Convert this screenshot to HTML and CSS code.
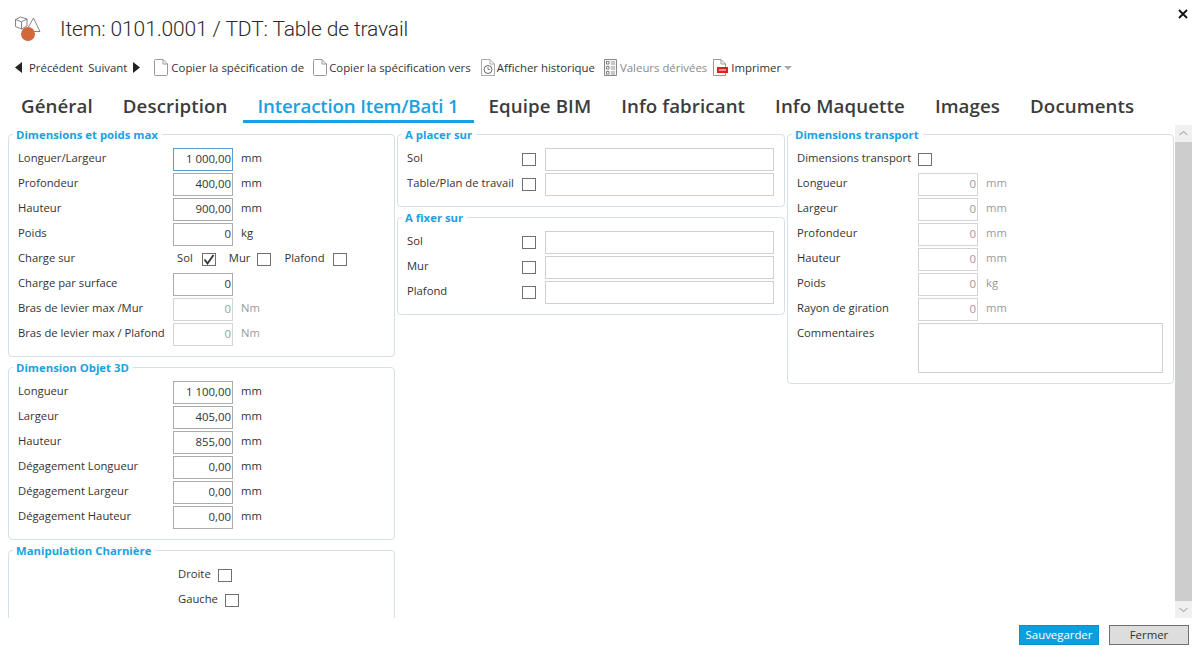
FILE: index.html
```html
<!DOCTYPE html>
<html lang="fr">
<head>
<meta charset="utf-8">
<title>Item</title>
<link rel="stylesheet" href="styles.css">
</head>
<body>
<div class="window">
  <header class="titlebar">
    <svg class="logo" width="28" height="28" viewBox="0 0 28 28">
      <g fill="#fff" stroke="#666" stroke-width=".8">
        <path d="M19.500 3 L26 16.500 H12 Z"/>
        <path d="M6.500 2 L13 4 V11 L7.500 14 L1.500 11.500 V4.500 Z"/>
        <path d="M1.500 4.500 L7.500 6.800 L13 4 M7.500 6.800 V14" fill="none"/>
      </g>
      <circle cx="14" cy="19" r="7" fill="#d2683a"/>
    </svg>
    <h1 class="title">Item: 0101.0001 / TDT: Table de travail</h1>
    <svg class="close" width="10" height="10" viewBox="0 0 10 10"><path d="M1 1 L9 9 M9 1 L1 9" stroke="#111" stroke-width="1.8"/></svg>
  </header>

  <nav class="toolbar">
    <svg class="tri-l" width="7" height="11" viewBox="0 0 7 11"><path d="M7 0 V11 L0 5.500 Z" fill="#222"/></svg>
    <span class="tool prev">Précédent</span>
    <span class="tool next">Suivant</span>
    <svg class="tri-r" width="7" height="11" viewBox="0 0 7 11"><path d="M0 0 V11 L7 5.500 Z" fill="#222"/></svg>
    <svg class="icon copy1" width="14" height="17" viewBox="0 0 14 17"><path d="M.5 1.500 Q.5.5 1.500.5 H9 L13.500 5 V15.500 Q13.500 16.500 12.500 16.500 H1.500 Q.5 16.500 .5 15.500 Z M9 .5 V5 H13.500" fill="#fff" stroke="#999"/></svg>
    <span class="tool">Copier la spécification de</span>
    <svg class="icon copy2" width="14" height="17" viewBox="0 0 14 17"><path d="M.5 1.500 Q.5.5 1.500.5 H9 L13.500 5 V15.500 Q13.500 16.500 12.500 16.500 H1.500 Q.5 16.500 .5 15.500 Z M9 .5 V5 H13.500" fill="#fff" stroke="#999"/></svg>
    <span class="tool">Copier la spécification vers</span>
    <svg class="icon hist" width="14" height="17" viewBox="0 0 14 17"><path d="M.5 .5 H9 L13.500 5 V16.500 H.5 Z M9 .5 V5 H13.500" fill="#fff" stroke="#aaa"/><circle cx="7" cy="10.500" r="4" fill="none" stroke="#666"/><path d="M7 8 V10.500 H9" fill="none" stroke="#666" stroke-width=".8"/></svg>
    <span class="tool">Afficher historique</span>
    <svg class="icon list" width="13" height="17" viewBox="0 0 13 17"><path d="M.5 .5 H12.500 V16.500 H.5 Z" fill="#f4f4f4" stroke="#888"/><path d="M2.500 2.500 H5 V5 H2.500 Z M2.500 7.500 H5 V10 H2.500 Z M2.500 12.500 H5 V15 H2.500 Z" fill="#fff" stroke="#666" stroke-width=".8"/><path d="M7 3 H11 M7 5 H11 M7 8 H11 M7 10 H11 M7 13 H11 M7 15 H11" stroke="#999"/></svg>
    <span class="tool off">Valeurs dérivées</span>
    <svg class="icon pdf" width="16" height="17" viewBox="0 0 16 17"><path d="M1.500 .5 H9 L13.500 5 V16.500 H1.500 Z M9 .5 V5 H13.500" fill="#fff" stroke="#999"/><rect x="5" y="8" width="11" height="6" fill="#e02020"/><path d="M7 11 H14" stroke="#fff"/></svg>
    <span class="tool print">Imprimer</span>
    <svg class="caret" width="8" height="4" viewBox="0 0 8 4"><path d="M0 0 H8 L4 4 Z" fill="#aaa"/></svg>
  </nav>

  <div class="tabs">
    <span class="tab">Général</span>
    <span class="tab">Description</span>
    <span class="tab active">Interaction Item/Bati 1</span>
    <span class="tab">Equipe BIM</span>
    <span class="tab">Info fabricant</span>
    <span class="tab">Info Maquette</span>
    <span class="tab">Images</span>
    <span class="tab">Documents</span>
  </div>

  <main class="body">
    <div class="panels">
      <section class="column">
        <fieldset class="group">
          <legend>Dimensions et poids max</legend>
          <div class="row"><label>Longuer/Largeur</label><input class="num focus" value="1 000,00"><span class="unit">mm</span></div>
          <div class="row"><label>Profondeur</label><input class="num" value="400,00"><span class="unit">mm</span></div>
          <div class="row"><label>Hauteur</label><input class="num" value="900,00"><span class="unit">mm</span></div>
          <div class="row"><label>Poids</label><input class="num" value="0"><span class="unit">kg</span></div>
          <div class="row">
            <label>Charge sur</label>
            <span class="opt sol">Sol</span>
            <span class="box on"><svg width="12" height="11" viewBox="0 0 12 11"><path d="M1.500 5.500 L4.500 9.500 L10.500 1" fill="none" stroke="#333" stroke-width="1.800"/></svg></span>
            <span class="opt mur">Mur</span>
            <span class="box"></span>
            <span class="opt plafond">Plafond</span>
            <span class="box"></span>
          </div>
          <div class="row"><label>Charge par surface</label><input class="num" value="0"></div>
          <div class="row"><label>Bras de levier max /Mur</label><input class="num off" value="0"><span class="unit off">Nm</span></div>
          <div class="row"><label>Bras de levier max / Plafond</label><input class="num off" value="0"><span class="unit off">Nm</span></div>
        </fieldset>
        <fieldset class="group">
          <legend>Dimension Objet 3D</legend>
          <div class="row"><label>Longueur</label><input class="num" value="1 100,00"><span class="unit">mm</span></div>
          <div class="row"><label>Largeur</label><input class="num" value="405,00"><span class="unit">mm</span></div>
          <div class="row"><label>Hauteur</label><input class="num" value="855,00"><span class="unit">mm</span></div>
          <div class="row"><label>Dégagement Longueur</label><input class="num" value="0,00"><span class="unit">mm</span></div>
          <div class="row"><label>Dégagement Largeur</label><input class="num" value="0,00"><span class="unit">mm</span></div>
          <div class="row"><label>Dégagement Hauteur</label><input class="num" value="0,00"><span class="unit">mm</span></div>
        </fieldset>
        <fieldset class="group tall">
          <legend>Manipulation Charnière</legend>
          <div class="row"><span class="opt indent droite">Droite</span><span class="box"></span></div>
          <div class="row"><span class="opt indent gauche">Gauche</span><span class="box"></span></div>
        </fieldset>
      </section>

      <section class="column">
        <fieldset class="group">
          <legend>A placer sur</legend>
          <div class="row"><label class="short">Sol</label><span class="box"></span><input class="wide"></div>
          <div class="row"><label class="short">Table/Plan de travail</label><span class="box"></span><input class="wide"></div>
        </fieldset>
        <fieldset class="group">
          <legend>A fixer sur</legend>
          <div class="row"><label class="short">Sol</label><span class="box"></span><input class="wide"></div>
          <div class="row"><label class="short">Mur</label><span class="box"></span><input class="wide"></div>
          <div class="row"><label class="short">Plafond</label><span class="box"></span><input class="wide"></div>
        </fieldset>
      </section>

      <section class="column">
        <fieldset class="group">
          <legend>Dimensions transport</legend>
          <div class="row"><label class="mid">Dimensions transport</label><span class="box"></span></div>
          <div class="row"><label class="mid">Longueur</label><input class="num off" value="0"><span class="unit off">mm</span></div>
          <div class="row"><label class="mid">Largeur</label><input class="num off" value="0"><span class="unit off">mm</span></div>
          <div class="row"><label class="mid">Profondeur</label><input class="num off" value="0"><span class="unit off">mm</span></div>
          <div class="row"><label class="mid">Hauteur</label><input class="num off" value="0"><span class="unit off">mm</span></div>
          <div class="row"><label class="mid">Poids</label><input class="num off" value="0"><span class="unit off">kg</span></div>
          <div class="row"><label class="mid">Rayon de giration</label><input class="num off" value="0"><span class="unit off">mm</span></div>
          <div class="row top"><label class="mid">Commentaires</label><textarea class="notes"></textarea></div>
        </fieldset>
      </section>
    </div>

    <div class="scrollbar">
      <svg class="arrow" width="17" height="17" viewBox="0 0 17 17"><path d="M4.500 10 L8.500 6.500 L12.500 10" fill="none" stroke="#b5b5b5" stroke-width="1.200"/></svg>
      <div class="thumb"></div>
      <svg class="arrow" width="17" height="17" viewBox="0 0 17 17"><path d="M4.500 7 L8.500 10.500 L12.500 7" fill="none" stroke="#b5b5b5" stroke-width="1.200"/></svg>
    </div>
  </main>

  <footer class="actions">
    <button class="btn primary">Sauvegarder</button>
    <button class="btn">Fermer</button>
  </footer>
</div>
</body>
</html>
```

FILE: styles.css
```css
* { box-sizing: border-box; }
html, body { margin: 0; padding: 0; background: #fff; }
body { font-family: "Open Sans", "Noto Sans", sans-serif; font-size: 11.400px; color: #333; }
.window { width: 1199px; height: 655px; display: flex; flex-direction: column; overflow: hidden; }

.titlebar { height: 56px; display: flex; align-items: flex-start; padding: 15px 10px 0 14px; flex: none; }
.logo { flex: none; }
.title { margin: 0 0 0 18px; flex: 1; font-family: Roboto, sans-serif; font-weight: 300; font-size: 21px; line-height: 28px; letter-spacing: -.13px; color: #2b2b2b; }
.close { margin: 0 1px 0 0; position: relative; top: -6px; }

.toolbar { height: 23px; flex: none; display: flex; align-items: center; padding-left: 15px; }
.tool { white-space: nowrap; line-height: 16px; color: #333; }
.tool.off { color: #8a8a8a; }
.icon { flex: none; }
.prev { margin-left: 7px; }
.next { margin-left: 5px; }
.tri-r { margin-left: 6px; }
.copy1 { margin: 0 3px 0 14px; }
.copy2 { margin: 0 2px 0 9px; }
.hist { margin: 0 2px 0 10px; }
.list { margin: 0 3px 0 9px; }
.pdf { margin: 0 3px 0 5px; }
.caret { margin-left: 3px; }

.tabs { height: 46px; flex: none; display: flex; padding: 3px 0 0 6px; }
.tab { padding: 7px 15px 0; height: 41px; font-size: 18.700px; font-weight: 600; line-height: 34px; letter-spacing: .1px; color: #3c3c3c; white-space: nowrap; border-bottom: 3px solid transparent; }
.tab.active { color: #1ba1e2; border-bottom-color: #1ba1e2; letter-spacing: -.17px; }

.body { flex: none; height: 493px; display: flex; overflow: hidden; }
.panels { width: 1175px; padding: 2px 0 0 8px; display: grid; grid-template-columns: 387px 388px 387px; column-gap: 2px; align-items: start; overflow: hidden; }
.column { display: flex; flex-direction: column; gap: 3px; min-width: 0; }

.group { margin: 0; min-width: 0; padding: 6px 9px 9px; border: 1px solid #d5e0e8; border-radius: 4px; flex: none; }
.group.tall { min-height: 110px; }
.group legend { padding: 1px 4px 0 3px; margin-left: -5px; height: 14px; line-height: 14px; font-size: 11.350px; font-weight: 700; color: #1ba1e2; white-space: nowrap; }

.row { height: 25px; display: flex; align-items: center; white-space: nowrap; font-size: 11.250px; }
.row.top { height: 52px; align-items: flex-start; padding-top: 1px; }
.row label, .opt, .unit { line-height: 16px; position: relative; top: -2px; }
.row label { width: 155px; flex: none; color: #333; }
.row label.short { width: 115px; }
.row label.mid { width: 121px; }
.row.top label { top: 2px; }

input, textarea { font: inherit; color: #333; background: #fff; margin: 0; border-radius: 0; outline: none; }
.num { width: 60px; height: 23px; border: 1px solid #ababab; text-align: right; padding: 0 1px 3px 0; flex: none; font-size: 11.400px; }
.num.focus { border-color: #5b9bd5; }
.num.off { border-color: #d4d4d4; color: #9a9a9a; }
.unit { margin-left: 8px; }
.unit.off { color: #9a9a9a; }
.wide { width: 229px; height: 23px; margin-left: 9px; border: 1px solid #d0d0d0; flex: none; }
.notes { width: 245px; height: 50px; border: 1px solid #d0d0d0; resize: none; display: block; }

.box { width: 14px; height: 13px; border: 1px solid #707070; flex: none; display: flex; align-items: center; justify-content: center; background: #fff; }
.sol { margin-left: 4px; margin-right: 9px; }
.mur { margin-left: 13px; margin-right: 7px; }
.plafond { margin-left: 13px; margin-right: 8px; }
.indent { margin-left: 160px; }
.droite { margin-right: 7px; }
.gauche { margin-right: 7px; }

.scrollbar { width: 17px; margin-right: 7px; background: #f0f0f0; display: flex; flex-direction: column; flex: none; }
.arrow { flex: none; }
.thumb { flex: 1; background: #cdcdcd; }

.actions { flex: 1; display: flex; justify-content: flex-end; gap: 10px; padding: 7px 10px 0 0; }
.btn { width: 80px; height: 20px; padding: 0 0 1px; font: inherit; border: 1px solid #707070; background: #ddd; color: #333; border-radius: 0; }
.btn.primary { background: #0d9fdd; border-color: #0a8fd0; color: #fff; }
```
